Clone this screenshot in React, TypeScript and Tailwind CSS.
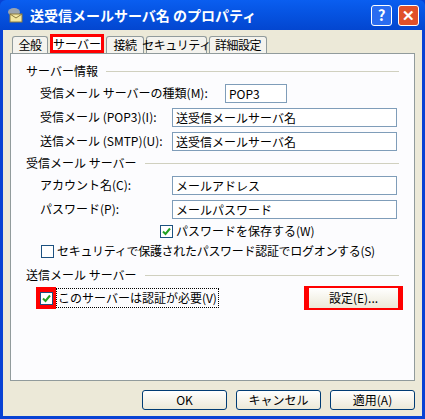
import React from "react";

const font = { fontFamily: '"Noto Sans CJK JP", "Liberation Sans", sans-serif' };

const Input = ({ value, className }: { value: string; className: string }) => (
  <div className={`h-[19px] border border-[#7f9db9] bg-white px-[3px] text-[12px] leading-[17px] whitespace-nowrap ${className}`}>{value}</div>
);

const Check = ({ checked }: { checked?: boolean }) => (
  <div className="w-[13px] h-[13px] border border-[#1c5180] bg-white flex items-center justify-center shrink-0">
    {checked && (
      <svg width="9" height="9" viewBox="0 0 9 9">
        <path d="M1 4.5 L3.5 7 L8 1.5" stroke="#21a121" strokeWidth="2" fill="none" />
      </svg>
    )}
  </div>
);

const Group = ({ title }: { title: string }) => (
  <div className="flex items-center gap-[8px] h-[16px] whitespace-nowrap">
    <span>{title}</span>
    <div className="flex-1 h-px bg-[#d0d0bf]" />
  </div>
);

const Row = ({ label, value, w, ml }: { label: string; value: string; w: string; ml: string }) => (
  <div className="flex items-center h-[24px] pl-[14px] whitespace-nowrap">
    <span className={ml}>{label}</span>
    <Input value={value} className={w} />
  </div>
);

const Btn = ({ label, className = "" }: { label: string; className?: string }) => (
  <div className={`h-[20px] w-[85px] rounded-[3px] border border-[#003c74] bg-gradient-to-b from-white to-[#ece9d8] flex items-center justify-center text-[12px] ${className}`}>
    {label}
  </div>
);

const Tab = ({ label, w }: { label: string; w: string }) => (
  <div className={`h-[17px] ${w} border border-b-0 border-[#919b9c] rounded-t-[3px] bg-[#f4f3ee] flex items-center justify-center whitespace-nowrap tracking-[-0.5px]`}>{label}</div>
);

export default function App() {
  return (
    <div style={font} className="w-[425px] h-[419px] bg-[#0842d4] flex flex-col text-[12px] text-black">
      <div className="h-[30px] flex items-center px-[6px] gap-[6px] bg-gradient-to-b from-[#0a5ef0] to-[#0346d0] rounded-t-[6px]">
        <svg width="18" height="18" viewBox="0 0 18 18">
          <ellipse cx="8" cy="6" rx="6" ry="4" fill="#9aa4b0" />
          <rect x="4" y="8" width="12" height="8" fill="#f2e6a0" stroke="#8a7a40" />
          <path d="M4 8 L10 12 L16 8" stroke="#8a7a40" fill="none" />
        </svg>
        <span className="text-white font-bold text-[14px] flex-1">送受信メールサーバ名 のプロパティ</span>
        <div className="w-[21px] h-[21px] rounded-[3px] border border-white bg-[#2a6cf0] text-white font-bold flex items-center justify-center text-[15px]">?</div>
        <div className="w-[21px] h-[21px] rounded-[3px] border border-white bg-[#e0502a] text-white font-bold flex items-center justify-center text-[15px]">✕</div>
      </div>
      <div className="flex-1 mx-[3px] mb-[3px] bg-[#ece9d8] flex flex-col px-[7px] pt-[6px]">
        <div className="flex items-end h-[17px] gap-[2px] ml-[2px]">
          <Tab label="全般" w="w-[36px]" />
          <div className="h-[19px] w-[54px] border-[3px] border-[#ff0000] bg-white flex items-center justify-center whitespace-nowrap">サーバー</div>
          <Tab label="接続" w="w-[38px]" />
          <Tab label="セキュリティ" w="w-[61px]" />
          <Tab label="詳細設定" w="w-[58px]" />
        </div>
        <div className="h-[328px] border border-[#919b9c] bg-[#fcfcfe] px-[15px] pt-[9px] flex flex-col">
          <Group title="サーバー情報" />
          <div className="h-[2px]" />
          <Row label="受信メール サーバーの種類(M):" value="POP3" ml="w-[185px]" w="w-[62px]" />
          <Row label="受信メール (POP3)(I):" value="送受信メールサーバ名" ml="w-[132px]" w="w-[225px]" />
          <Row label="送信メール (SMTP)(U):" value="送受信メールサーバ名" ml="w-[132px]" w="w-[225px]" />
          <div className="h-[2px]" />
          <Group title="受信メール サーバー" />
          <div className="h-[2px]" />
          <Row label="アカウント名(C):" value="メールアドレス" ml="w-[132px]" w="w-[225px]" />
          <Row label="パスワード(P):" value="メールパスワード" ml="w-[132px]" w="w-[225px]" />
          <div className="flex items-center gap-[3px] h-[20px] pl-[134px] whitespace-nowrap"><Check checked /><span>パスワードを保存する(W)</span></div>
          <div className="flex items-center gap-[3px] h-[20px] pl-[15px] whitespace-nowrap tracking-[-0.3px]"><Check /><span>セキュリティで保護されたパスワード認証でログオンする(S)</span></div>
          <div className="h-[6px]" />
          <Group title="送信メール サーバー" />
          <div className="flex items-center h-[30px] pl-[10px]">
            <div className="w-[20px] h-[22px] bg-[#ff0000] flex items-center justify-center shrink-0"><Check checked /></div>
            <span className="border border-dotted border-black px-[1px] whitespace-nowrap">このサーバーは認証が必要(V)</span>
            <div className="flex-1" />
            <div className="w-[99px] h-[24px] bg-[#ff0000] flex items-center justify-center mr-[-4px] shrink-0">
              <Btn label="設定(E)..." className="h-[16px] w-[89px] rounded-none border-0" />
            </div>
          </div>
        </div>
        <div className="flex justify-end gap-[9px] mt-[9px]">
          <Btn label="OK" />
          <Btn label="キャンセル" />
          <Btn label="適用(A)" />
        </div>
      </div>
    </div>
  );
}
